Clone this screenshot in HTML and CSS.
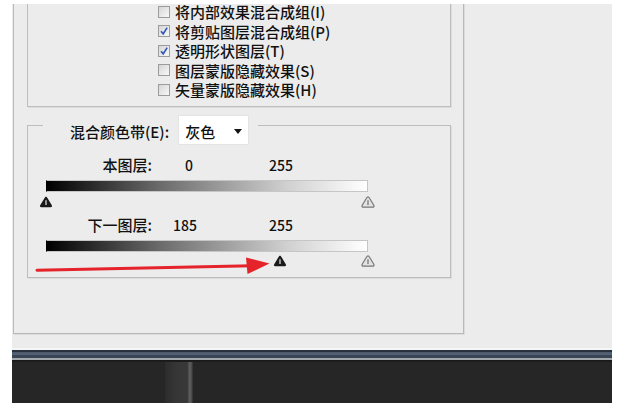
FILE: index.html
```html
<!DOCTYPE html>
<html lang="zh-CN">
<head>
<meta charset="utf-8">
<title>混合颜色带</title>
<link rel="stylesheet" href="styles.css">
</head>
<body>
<div class="page">
  <div class="dialog">
    <div class="outer">
      <div class="checkgroup">
        <ul class="checks">
          <li><span class="cb"></span>将内部效果混合成组(I)</li>
          <li><span class="cb"><svg viewBox="0 0 10 10" width="10" height="10"><path d="M2 5.2 L4.2 7.8 L8.2 1.6" fill="none" stroke="#2f57b5" stroke-width="1.6"/></svg></span>将剪贴图层混合成组(P)</li>
          <li><span class="cb"><svg viewBox="0 0 10 10" width="10" height="10"><path d="M2 5.2 L4.2 7.8 L8.2 1.6" fill="none" stroke="#2f57b5" stroke-width="1.6"/></svg></span>透明形状图层(T)</li>
          <li><span class="cb"></span>图层蒙版隐藏效果(S)</li>
          <li><span class="cb"></span>矢量蒙版隐藏效果(H)</li>
        </ul>
      </div>
      <div class="blend">
        <div class="legend">
          <span class="legend-label">混合颜色带(E):</span>
          <span class="select">灰色<span class="caret"></span></span>
        </div>
        <div class="row">
          <span class="lbl">本图层:</span><span class="val a">0</span><span class="val">255</span>
        </div>
        <div class="bar"></div>
        <div class="handles">
          <span class="h" style="left:0%"><svg viewBox="0 0 14 12" width="14" height="12"><path d="M7 0.8 C7.8 0.8 8.1 1.4 8.6 2.3 L12.8 9.2 C13.4 10.3 12.8 11.2 11.7 11.2 L2.3 11.2 C1.2 11.2 0.6 10.3 1.2 9.2 L5.4 2.3 C5.9 1.4 6.2 0.8 7 0.8 Z" fill="#1a1a1a"/><path d="M7 4.2 V9" stroke="#d8d8d8" stroke-width="1.3"/></svg></span>
          <span class="h" style="left:100%"><svg viewBox="0 0 14 12" width="14" height="12"><path d="M7 0.8 C7.8 0.8 8.1 1.4 8.6 2.3 L12.8 9.2 C13.4 10.3 12.8 11.2 11.7 11.2 L2.3 11.2 C1.2 11.2 0.6 10.3 1.2 9.2 L5.4 2.3 C5.9 1.4 6.2 0.8 7 0.8 Z" fill="#e2e2e2" stroke="#777" stroke-width="1.2"/><path d="M7 4.2 V9" stroke="#777" stroke-width="1.3"/></svg></span>
        </div>
        <div class="row row2">
          <span class="lbl">下一图层:</span><span class="val b">185</span><span class="val">255</span>
        </div>
        <div class="bar bar2"></div>
        <div class="handles handles2">
          <span class="h" style="left:72.55%"><svg viewBox="0 0 14 12" width="14" height="12"><path d="M7 0.8 C7.8 0.8 8.1 1.4 8.6 2.3 L12.8 9.2 C13.4 10.3 12.8 11.2 11.7 11.2 L2.3 11.2 C1.2 11.2 0.6 10.3 1.2 9.2 L5.4 2.3 C5.9 1.4 6.2 0.8 7 0.8 Z" fill="#1a1a1a"/><path d="M7 4.2 V9" stroke="#d8d8d8" stroke-width="1.3"/></svg></span>
          <span class="h" style="left:100%"><svg viewBox="0 0 14 12" width="14" height="12"><path d="M7 0.8 C7.8 0.8 8.1 1.4 8.6 2.3 L12.8 9.2 C13.4 10.3 12.8 11.2 11.7 11.2 L2.3 11.2 C1.2 11.2 0.6 10.3 1.2 9.2 L5.4 2.3 C5.9 1.4 6.2 0.8 7 0.8 Z" fill="#e2e2e2" stroke="#777" stroke-width="1.2"/><path d="M7 4.2 V9" stroke="#777" stroke-width="1.3"/></svg></span>
        </div>
        <svg class="arrow" viewBox="0 0 250 22" width="250" height="22">
          <path d="M9 14.2 L224 9.8" stroke="#e5232b" stroke-width="3" stroke-linecap="round" fill="none"/>
          <polygon points="218,1.5 241.5,7.5 219.5,18" fill="#e5232b"/>
        </svg>
      </div>
    </div>
  </div>
  <div class="taskbar">
    <div class="tb-top"></div>
    <div class="tb-body"><span class="tb-col"></span></div>
  </div>
</div>
</body>
</html>
```

FILE: styles.css
```css
html, body {
  margin: 0;
  background: #ffffff;
}

body {
  font-family: "Noto Sans CJK SC", "Noto Sans", sans-serif;
  font-size: 15px;
  font-weight: 500;
  color: #111111;
}

.page {
  width: 600px;
  padding: 4px 12px 0;
}

.dialog {
  height: 346px;
  box-sizing: border-box;
  background: #ececec;
  border-bottom: 2px solid #f6f6f6;
  overflow: hidden;
  padding-left: 1px;
}

.outer {
  box-sizing: border-box;
  width: 451px;
  height: 332px;
  border: 1px solid #b9b9b9;
  border-top: 0;
  box-shadow: 1px 1px 0 #dcdcdc;
  padding-left: 13px;
}

.checkgroup {
  box-sizing: border-box;
  width: 424px;
  height: 105px;
  border: 1px solid #bdbdbd;
  border-top: 0;
  box-shadow: 1px 1px 0 #dcdcdc;
}

.checks {
  list-style: none;
  margin: -2px 0 0;
  padding: 0 0 0 130px;
}

.checks li {
  display: flex;
  align-items: center;
  height: 19.5px;
  line-height: 19.5px;
  white-space: nowrap;
}

.cb {
  box-sizing: border-box;
  width: 12px;
  height: 12px;
  margin-right: 5px;
  border: 1px solid #9c9c9c;
  background: linear-gradient(135deg, #d6d6d6, #f8f8f8);
  display: flex;
  align-items: center;
  justify-content: center;
  flex: none;
}

.cb svg {
  display: block;
}

.blend {
  position: relative;
  box-sizing: border-box;
  width: 424px;
  height: 153px;
  margin-top: 18px;
  border: 1px solid #bdbdbd;
  box-shadow: 1px 1px 0 #dcdcdc;
  padding-top: 30px;
}

.legend {
  position: absolute;
  left: 15px;
  top: -11px;
  height: 30px;
  display: flex;
  align-items: center;
  background: #ececec;
  padding: 0 9px 0 27px;
}

.legend-label {
  margin-right: 9px;
  white-space: nowrap;
  padding-top: 3px;
}

.select {
  box-sizing: border-box;
  width: 71px;
  height: 30px;
  background: #ffffff;
  border: 1px solid #e4e4e4;
  display: flex;
  align-items: center;
  padding-left: 6px;
  padding-top: 2px;
}

.caret {
  margin-left: auto;
  margin-right: 6px;
  width: 0;
  height: 0;
  border-left: 4px solid transparent;
  border-right: 4px solid transparent;
  border-top: 5px solid #151515;
}

.row {
  display: flex;
  height: 18px;
  line-height: 18px;
  font-size: 14px;
  white-space: nowrap;
}

.row2 {
  margin-top: 9px;
}

.lbl {
  width: 124px;
  text-align: right;
  font-size: 15px;
}

.val.a {
  margin-left: 33px;
  width: 84px;
}

.val.b {
  margin-left: 21px;
  width: 96px;
}

.bar {
  box-sizing: border-box;
  width: 322px;
  height: 12px;
  margin: 6px 0 0 18px;
  border: 1px solid #c6c6c6;
  border-left-color: #000;
  background: linear-gradient(to right, #000000 0%, #6a6a6a 35%, #d0d0d0 75%, #ffffff 100%);
}

.handles {
  position: relative;
  width: 322px;
  height: 10px;
  margin: 5px 0 0 18px;
}

.handles2 {
  margin-top: 4px;
}

.h {
  position: absolute;
  top: -1px;
  width: 14px;
  height: 12px;
  transform: translateX(-50%);
}

.h svg {
  display: block;
}

.arrow {
  position: absolute;
  left: 0;
  top: 130px;
  overflow: visible;
}

.taskbar {
  width: 600px;
  height: 53px;
  background: #262626;
  display: flex;
  flex-direction: column;
}

.tb-top {
  height: 12px;
  flex: none;
  background: linear-gradient(to bottom,
    #28313c 0px, #28313c 2px,
    #4b5868 2px, #56647a 5px,
    #394555 5px, #394555 8px,
    #a4a9ae 8px, #a4a9ae 10px,
    #181818 10px, #1e1e1e 12px);
}

.tb-body {
  flex: 1;
  display: flex;
  padding-left: 153px;
}

.tb-col {
  width: 28px;
  background: linear-gradient(to right, #2c2c2c 0%, #363636 40%, #383838 80%, #5a5a5a 86%, #5a5a5a 92%, #2e2e2e 100%);
}
```
